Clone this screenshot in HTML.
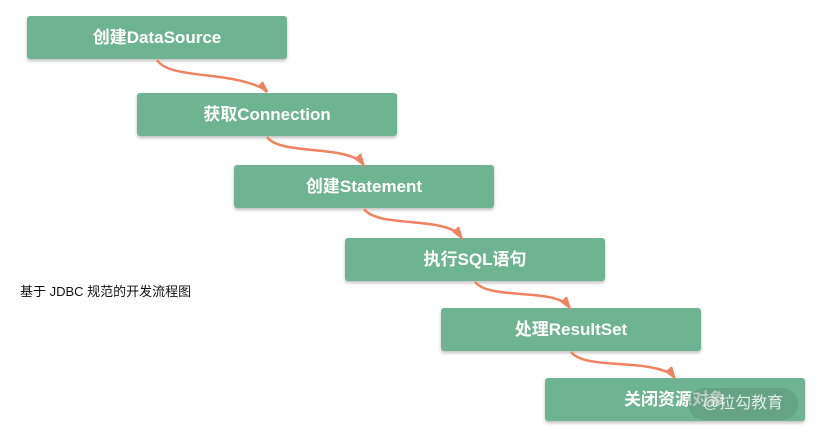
<!DOCTYPE html>
<html><head><meta charset="utf-8"><style>
body{margin:0;width:817px;height:440px;background:#fff;position:relative;overflow:hidden;font-family:"Liberation Sans","Noto Sans CJK SC",sans-serif}
.b{position:absolute;width:260px;height:43px;background:#6fb492;border-radius:3px;box-shadow:0 2px 3px rgba(0,0,0,.25);color:#fff;font-size:17px;font-weight:600;line-height:43px;text-align:center}
.t{position:absolute;left:20px;top:281px;font-size:13px;color:#111}
svg{position:absolute;left:0;top:0}
.w{position:absolute;left:688px;top:388px;width:110px;height:32px;border-radius:16px;background:rgba(90,140,115,.45);color:rgba(255,255,255,.8);font-size:16px;line-height:32px;text-align:center}
</style></head><body>
<div class="b" style="left:27px;top:16px">创建DataSource</div>
<div class="b" style="left:137px;top:93px">获取Connection</div>
<div class="b" style="left:234px;top:165px">创建Statement</div>
<div class="b" style="left:345px;top:238px">执行SQL语句</div>
<div class="b" style="left:441px;top:308px">处理ResultSet</div>
<div class="b" style="left:545px;top:378px">关闭资源对象</div>
<div class="w">@拉勾教育</div>
<div class="t">基于 JDBC 规范的开发流程图</div>
<svg width="817" height="440" fill="none" stroke="#ef8260" stroke-width="2.5">
<path d="M157 60 C170 80 230 70 266 90"/><path d="M259 85 L267 92 L262 82" fill="#ef8260"/>
<path d="M267 137 C280 155 340 145 362 162"/><path d="M355 158 L363 164 L360 154" fill="#ef8260"/>
<path d="M364 209 C378 228 440 216 460 235"/><path d="M453 231 L461 237 L458 227" fill="#ef8260"/>
<path d="M475 282 C490 300 548 288 568 305"/><path d="M561 301 L569 307 L566 297" fill="#ef8260"/>
<path d="M571 352 C585 370 645 358 673 375"/><path d="M666 371 L674 377 L671 367" fill="#ef8260"/>
</svg>
</body></html>
